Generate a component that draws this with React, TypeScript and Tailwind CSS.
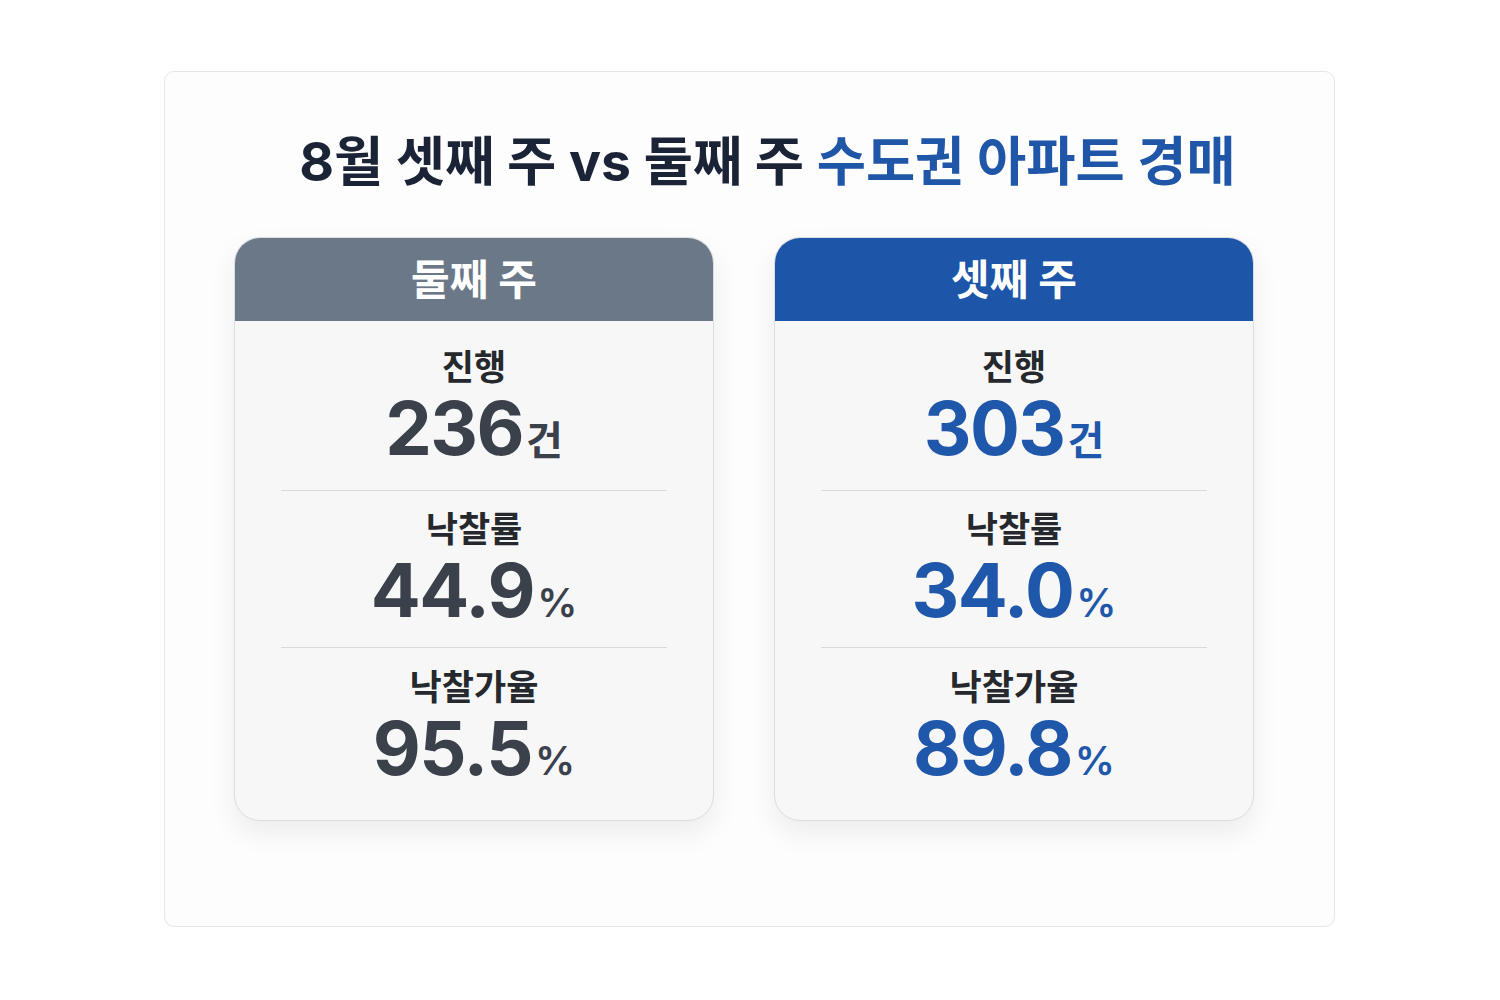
import * as React from 'react'

const font = { fontFamily: 'Inter, "Noto Sans CJK KR", sans-serif' }

interface Stat {
  label: string
  value: string
  unit: string
}

interface WeekCardProps {
  title: string
  headerClass: string
  valueClass: string
  stats: Stat[]
}

const rowClasses = ['h-[170px] pt-[30px]', 'h-[157px] pt-[22px]', 'h-[172px] pt-[23px]']

function WeekCard({ title, headerClass, valueClass, stats }: WeekCardProps) {
  return (
    <div className="w-[480px] overflow-hidden rounded-[26px] border border-[#dcdde0] bg-[#f7f7f8] shadow-[0_12px_28px_rgba(0,0,0,0.07)]">
      {/* header */}
      <div className={`flex h-[83px] items-center justify-center ${headerClass}`}>
        <span className="text-[42px] font-bold text-white">{title}</span>
      </div>

      {stats.map((s, i) => (
        <div key={s.label} className={`flex flex-col px-[46px] ${rowClasses[i]}`}>
          <div className="flex min-h-0 flex-1 flex-col items-center">
            <p className="text-[35px] font-semibold leading-[32px] text-[#25282d]">{s.label}</p>
            <p className={`flex h-[90px] items-baseline ${valueClass}`}>
              <span className="text-[74px] font-bold leading-[90px] tracking-[-1.5px]">{s.value}</span>
              <span className="ml-[3px] text-[40px] font-semibold leading-none">{s.unit}</span>
            </p>
          </div>
          {i < stats.length - 1 && <div className="h-px shrink-0 bg-[#d9dadd]" />}
        </div>
      ))}
    </div>
  )
}

export default function App() {
  return (
    <div className="min-h-[1000px] w-[1500px] bg-white pl-[164px] pt-[71px]" style={font}>
      <div className="flex h-[856px] w-[1171px] flex-col rounded-[10px] border border-[#e6e6e8] bg-[#fdfdfd]">
        {/* Title */}
        <h1 className="mt-[58px] pl-[36px] text-center text-[53.5px] font-bold leading-[64px] text-[#1b2437]">
          8월 셋째 주 vs 둘째 주 <span className="text-[#1f56a8]">수도권 아파트 경매</span>
        </h1>

        <div className="mt-[43px] flex gap-[60px] pl-[69px]">
          <WeekCard
            title="둘째 주"
            headerClass="bg-[#6b7888]"
            valueClass="text-[#3b414b]"
            stats={[
              { label: '진행', value: '236', unit: '건' },
              { label: '낙찰률', value: '44.9', unit: '%' },
              { label: '낙찰가율', value: '95.5', unit: '%' },
            ]}
          />
          <WeekCard
            title="셋째 주"
            headerClass="bg-[#1d55a9]"
            valueClass="text-[#1f57aa]"
            stats={[
              { label: '진행', value: '303', unit: '건' },
              { label: '낙찰률', value: '34.0', unit: '%' },
              { label: '낙찰가율', value: '89.8', unit: '%' },
            ]}
          />
        </div>
      </div>
    </div>
  )
}
